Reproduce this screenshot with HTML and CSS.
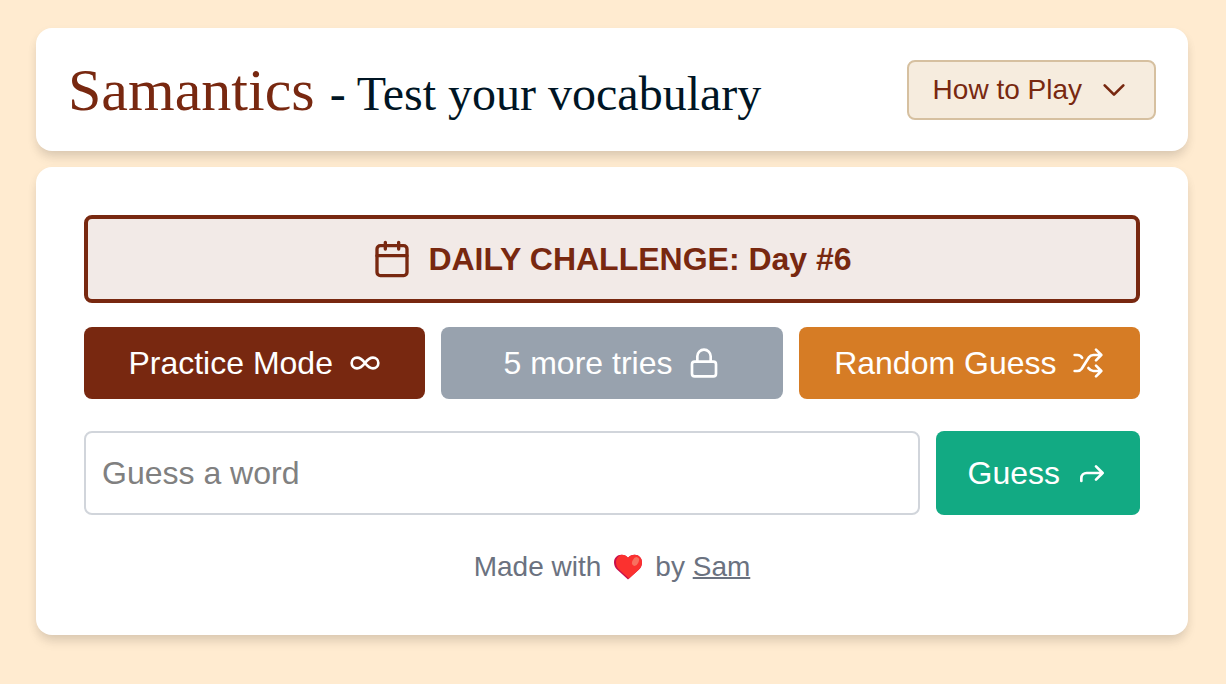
FILE: index.html
```html
<!DOCTYPE html>
<html lang="en">
<head>
<meta charset="utf-8">
<meta name="viewport" content="width=device-width, initial-scale=1">
<title>Samantics - Test your vocabulary</title>
<link rel="stylesheet" href="styles.css">
</head>
<body>
<div class="page">
  <header class="card header">
    <h1 class="title"><span class="brand">Samantics</span> <span class="tagline">- Test your vocabulary</span></h1>
    <button class="help" type="button">How to Play
      <svg class="icon" viewBox="0 0 24 24" aria-hidden="true"><path d="m19 8.500-7 7-7-7"/></svg>
    </button>
  </header>

  <main class="card game">
    <div class="banner">
      <svg class="icon icon-large" viewBox="0 0 24 24" aria-hidden="true"><path d="M8 2v4M16 2v4M3 10h18"/><rect x="3" y="4" width="18" height="18" rx="2"/></svg>
      <span>DAILY CHALLENGE: Day #6</span>
    </div>

    <div class="actions">
      <button class="button practice" type="button">Practice Mode
        <svg class="icon" viewBox="0 0 24 24" aria-hidden="true"><path d="M12 12c-2-2.67-4-4-6-4a4 4 0 1 0 0 8c2 0 4-1.330 6-4Zm0 0c2 2.670 4 4 6 4a4 4 0 0 0 0-8c-2 0-4 1.330-6 4Z"/></svg>
      </button>
      <button class="button locked" type="button">5 more tries
        <svg class="icon" viewBox="0 0 24 24" aria-hidden="true"><rect x="3" y="11" width="18" height="11" rx="2"/><path d="M7 11V7a5 5 0 0 1 10 0v4"/></svg>
      </button>
      <button class="button random" type="button">Random Guess
        <svg class="icon" viewBox="0 0 24 24" aria-hidden="true"><path d="m18 14 4 4-4 4M18 2l4 4-4 4M2 18h1.973a4 4 0 0 0 3.3-1.7l5.454-8.6a4 4 0 0 1 3.3-1.7H22M2 6h1.972a4 4 0 0 1 3.6 2.2M22 18h-6.041a4 4 0 0 1-3.3-1.8l-.359-.45"/></svg>
      </button>
    </div>

    <form class="guess-form">
      <input class="word" type="text" placeholder="Guess a word" aria-label="Guess a word">
      <button class="button submit" type="button">Guess
        <svg class="icon" viewBox="0 0 24 24" aria-hidden="true"><path d="m15 17 5-5-5-5M4 18v-2a4 4 0 0 1 4-4h12"/></svg>
      </button>
    </form>

    <footer class="credit">
      <span>Made with</span>
      <svg class="heart" viewBox="0 0 28 26" role="img" aria-label="love">
        <path fill="#c90f4b" d="M14 25.500L3 15.500C1 13.500 0 11 0 8.500C0 4 3.200 .8 7.300 .8C10 .8 12.500 1.800 14 3.800C15.500 1.800 18 .8 20.700 .8C24.800 .8 28 4 28 8.500C28 11 27 13.500 25 15.500Z"/>
        <path fill="#fb312f" d="M15 24.600L5 15.500C3 13.500 2 11 2 8.500C2 4.500 4.500 1.400 8 .8C10.500 .9 12.700 2 14 3.800C15.500 1.800 18 .8 20.700 .8C24.800 .8 28 4 28 8.500C28 11 27 13.500 25 15.500Z"/>
        <ellipse cx="21.500" cy="7.500" rx="3" ry="4.600" fill="#f8705f" transform="rotate(28 21.500 7.500)"/>
      </svg>
      <span>by <a class="author" href="#">Sam</a></span>
    </footer>
  </main>
</div>
</body>
</html>
```

FILE: styles.css
```css
* {
  box-sizing: border-box;
}

body {
  margin: 0;
  background: #ffebd0;
  font-family: "Liberation Sans", Arial, sans-serif;
}

.page {
  display: flex;
  flex-direction: column;
  gap: 16px;
  padding: 28px 38px 28px 36px;
}

.card {
  background: #fff;
  border-radius: 16px;
  box-shadow: 0 8px 12px -2px rgb(0 0 0 / 0.1), 0 4px 12px -2px rgb(0 0 0 / 0.08);
}

.header {
  display: flex;
  align-items: center;
  justify-content: space-between;
  padding: 32px 32px 31px;
}

.title {
  margin: 0;
  font-family: "Liberation Serif", "Times New Roman", serif;
  font-size: 60px;
  font-weight: 400;
  line-height: 60px;
}

.brand {
  color: #782810;
}

.tagline {
  color: #001524;
  font-size: 48px;
  line-height: 48px;
}

.icon {
  flex: none;
  width: 32px;
  height: 32px;
  fill: none;
  stroke: currentColor;
  stroke-width: 2;
  stroke-linecap: round;
  stroke-linejoin: round;
}

.icon-large {
  width: 40px;
  height: 40px;
}

.help {
  display: flex;
  align-items: center;
  gap: 16px;
  height: 60px;
  padding: 0 24px;
  border: 2px solid #d6c0a0;
  border-radius: 8px;
  background: #f6ecde;
  color: #782810;
  font-family: inherit;
  font-size: 28px;
}

.game {
  padding: 48px;
}

.banner {
  display: flex;
  align-items: center;
  justify-content: center;
  gap: 16px;
  padding: 20px;
  border: 4px solid #782810;
  border-radius: 8px;
  background: #f2eae7;
  color: #782810;
  font-size: 32px;
  font-weight: 700;
  line-height: 40px;
}

.actions {
  display: grid;
  grid-template-columns: repeat(3, 1fr);
  gap: 16px;
  margin-top: 24px;
}

.button {
  display: flex;
  align-items: center;
  justify-content: center;
  gap: 16px;
  min-height: 72px;
  padding: 0 32px;
  border: 0;
  border-radius: 8px;
  color: #fff;
  font-family: inherit;
  font-size: 32px;
}

.practice {
  background: #782810;
}

.locked {
  background: #98a2ae;
}

.random {
  background: #d67c25;
}

.guess-form {
  display: flex;
  gap: 16px;
  margin-top: 32px;
}

.word {
  flex: 1;
  min-width: 0;
  height: 84px;
  padding: 0 16px;
  border: 2px solid #d1d5db;
  border-radius: 8px;
  background: #fff;
  color: #001524;
  font-family: inherit;
  font-size: 32px;
}

.word::placeholder {
  color: #808080;
}

.submit {
  background: #12aa83;
}

.credit {
  display: flex;
  align-items: center;
  justify-content: center;
  gap: 13px;
  margin-top: 32px;
  color: #6b7280;
  font-size: 28px;
  line-height: 40px;
}

.heart {
  width: 28px;
  height: 26px;
}

.author {
  color: inherit;
  text-decoration-thickness: 2px;
}
```
